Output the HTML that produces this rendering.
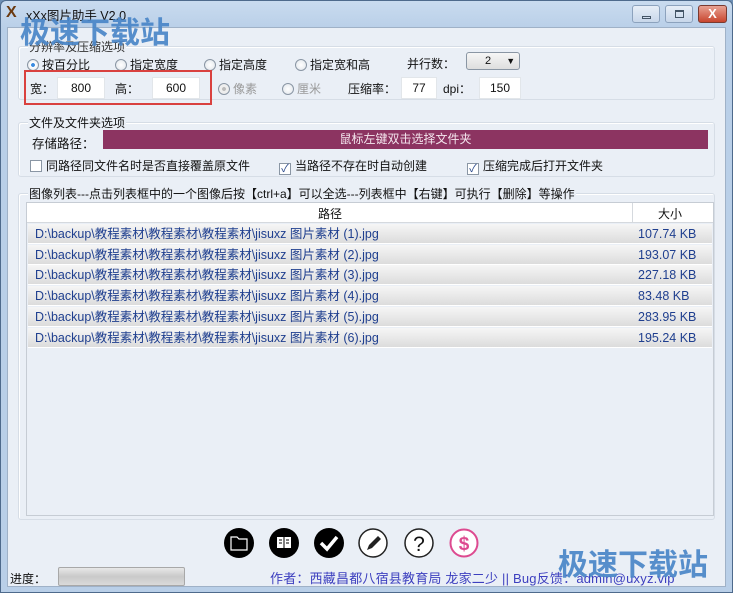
<!DOCTYPE html>
<html><head><meta charset="utf-8"><style>
*{margin:0;padding:0;box-sizing:border-box}
body{width:733px;height:593px;overflow:hidden;font-family:"Liberation Sans","Noto Sans CJK SC",sans-serif;font-size:12px;color:#111;background:#6d8fb5;position:relative}
.abs{position:absolute}
.win{left:0;top:0;width:733px;height:593px;background:linear-gradient(#c9dbef,#b9cfe8 28px);border:1px solid #4e6a8c;border-radius:6px 6px 0 0}
.client{left:7px;top:27px;width:719px;height:560px;background:#eaeff6;border:1px solid #9fb1c7}
.grp{border:1px solid #d6dde6;border-radius:3px;box-shadow:inset 1px 1px 0 #fff}
.lbl{background:#eaeff6;padding:0 1px;white-space:nowrap}
.radio{display:inline-block;width:12px;height:12px;border:1px solid #8a96a4;border-radius:50%;background:radial-gradient(#fff,#dfe4ea);vertical-align:-2px;margin-right:3px}
.radio.on{background:radial-gradient(#3a8be0 25%,#fff 30%,#dfe4ea)}
.chk{display:inline-block;width:12px;height:12px;border:1px solid #8a96a4;background:#fff;vertical-align:-2px;margin-right:4px;font-size:11px;line-height:10px;text-align:center;color:#2b4a8c}
.inp{background:#fff;border:1px solid #e2e6ea;text-align:center;line-height:20px;height:22px}
.row{left:28px;width:684px;height:20px;background:linear-gradient(#f6f6f6,#dcdcdc);border-bottom:1px solid #fff;color:#1f3f8f;line-height:20px;font-size:12.5px}
.row span{position:absolute}
.wm{color:#4a86c8;font-size:31px;font-weight:bold;font-family:"Noto Sans CJK SC",sans-serif;opacity:.92;letter-spacing:0}
</style></head><body>
<div class="abs win"></div>
<div class="abs" style="left:6px;top:4px;font-weight:bold;font-size:16px;color:#6b3a10">X</div>
<div class="abs" style="left:26px;top:5px;font-size:12.5px">xXx图片助手 V2.0</div>
<div class="abs" style="left:632px;top:5px;width:28px;height:18px;border:1px solid #8ca2bd;border-radius:3px;background:linear-gradient(#e7eef7,#c8d7ea)"><div class="abs" style="left:9px;top:10px;width:9px;height:3px;border:1px solid #456"></div></div>
<div class="abs" style="left:665px;top:5px;width:28px;height:18px;border:1px solid #8ca2bd;border-radius:3px;background:linear-gradient(#e7eef7,#c8d7ea)"><div class="abs" style="left:9px;top:4px;width:9px;height:8px;border:1px solid #456;border-top-width:2px"></div></div>
<div class="abs" style="left:698px;top:5px;width:29px;height:18px;border:1px solid #7a3a30;border-radius:3px;background:linear-gradient(#e8a293,#c8452e);color:#fff;font-weight:bold;text-align:center;line-height:16px;font-size:13px">X</div>
<div class="abs client"></div>

<div class="abs grp" style="left:18px;top:46px;width:697px;height:54px"></div>
<div class="abs lbl" style="left:28px;top:38px;color:#333">分辨率及压缩选项</div>
<div class="abs" style="left:27px;top:56px"><span class="radio on"></span>按百分比</div>
<div class="abs" style="left:115px;top:56px"><span class="radio"></span>指定宽度</div>
<div class="abs" style="left:204px;top:56px"><span class="radio"></span>指定高度</div>
<div class="abs" style="left:295px;top:56px"><span class="radio"></span>指定宽和高</div>
<div class="abs" style="left:407px;top:55px">并行数：</div>
<div class="abs" style="left:466px;top:52px;width:54px;height:18px;border:1px solid #8a96a4;border-radius:3px;background:linear-gradient(#f6f6f6,#dedede);font-size:11px;line-height:16px;padding-left:18px">2 <span style="margin-left:12px;font-size:9px">▼</span></div>
<div class="abs" style="left:24px;top:70px;width:188px;height:35px;border:2px solid #d9413f"></div>
<div class="abs" style="left:30px;top:80px">宽：</div>
<div class="abs inp" style="left:57px;top:77px;width:48px">800</div>
<div class="abs" style="left:115px;top:80px">高：</div>
<div class="abs inp" style="left:152px;top:77px;width:48px">600</div>
<div class="abs" style="left:218px;top:80px;color:#999"><span class="radio" style="background:radial-gradient(#bbb 25%,#eee 30%)"></span>像素</div>
<div class="abs" style="left:282px;top:80px;color:#999"><span class="radio"></span>厘米</div>
<div class="abs" style="left:348px;top:80px">压缩率：</div>
<div class="abs inp" style="left:401px;top:77px;width:36px">77</div>
<div class="abs" style="left:443px;top:80px">dpi：</div>
<div class="abs inp" style="left:479px;top:77px;width:42px">150</div>

<div class="abs grp" style="left:18px;top:122px;width:697px;height:55px"></div>
<div class="abs lbl" style="left:28px;top:114px">文件及文件夹选项</div>
<div class="abs" style="left:32px;top:133px;font-size:12.5px">存储路径：</div>
<div class="abs" style="left:103px;top:130px;width:605px;height:19px;background:#8c3461;color:#f4e6ee;text-align:center;line-height:19px">鼠标左键双击选择文件夹</div>
<div class="abs" style="left:30px;top:157px"><span class="chk"></span>同路径同文件名时是否直接覆盖原文件</div>
<div class="abs" style="left:279px;top:157px"><span class="chk">✓</span>当路径不存在时自动创建</div>
<div class="abs" style="left:467px;top:157px"><span class="chk">✓</span>压缩完成后打开文件夹</div>

<div class="abs grp" style="left:18px;top:193px;width:697px;height:327px"></div>
<div class="abs lbl" style="left:28px;top:185px">图像列表---点击列表框中的一个图像后按【ctrl+a】可以全选---列表框中【右键】可执行【删除】等操作</div>
<div class="abs" style="left:26px;top:202px;width:688px;height:314px;background:#eaeff6;border:1px solid #c6ccd4"></div>
<div class="abs" style="left:27px;top:203px;width:686px;height:20px;background:#fff;border-bottom:1px solid #d5d9de"></div>
<div class="abs" style="left:632px;top:203px;width:1px;height:20px;background:#d5d9de"></div>
<div class="abs" style="left:318px;top:205px">路径</div>
<div class="abs" style="left:658px;top:205px">大小</div>
<div class="abs row" style="top:224px"><span style="left:7px">D:\backup\教程素材\教程素材\教程素材\jisuxz 图片素材 (1).jpg</span><span style="left:610px">107.74 KB</span></div>
<div class="abs row" style="top:245px"><span style="left:7px">D:\backup\教程素材\教程素材\教程素材\jisuxz 图片素材 (2).jpg</span><span style="left:610px">193.07 KB</span></div>
<div class="abs row" style="top:265px"><span style="left:7px">D:\backup\教程素材\教程素材\教程素材\jisuxz 图片素材 (3).jpg</span><span style="left:610px">227.18 KB</span></div>
<div class="abs row" style="top:286px"><span style="left:7px">D:\backup\教程素材\教程素材\教程素材\jisuxz 图片素材 (4).jpg</span><span style="left:610px">83.48 KB</span></div>
<div class="abs row" style="top:307px"><span style="left:7px">D:\backup\教程素材\教程素材\教程素材\jisuxz 图片素材 (5).jpg</span><span style="left:610px">283.95 KB</span></div>
<div class="abs row" style="top:328px"><span style="left:7px">D:\backup\教程素材\教程素材\教程素材\jisuxz 图片素材 (6).jpg</span><span style="left:610px">195.24 KB</span></div>

<svg class="abs" style="left:0;top:0" width="733" height="593">
<circle cx="239" cy="543" r="15" fill="#000"/>
<path d="M231 537h6l2 2h8v11h-16z" fill="none" stroke="#fff" stroke-width="1.2"/>
<circle cx="284" cy="543" r="15" fill="#000"/>
<rect x="277" y="537" width="14" height="11" fill="#fff"/><path d="M284 537v11M279 540h3M279 543h3M286 540h3M286 543h3" stroke="#000" stroke-width="1"/>
<circle cx="329" cy="543" r="15" fill="#000"/>
<path d="M321 543l6 6 10-12" fill="none" stroke="#fff" stroke-width="3.5"/>
<circle cx="373" cy="543" r="14" fill="#fff" stroke="#222" stroke-width="1.5"/>
<path d="M367 550l2-5 9-9 3 3-9 9z" fill="#222"/>
<circle cx="419" cy="543" r="14" fill="#fff" stroke="#222" stroke-width="1.5"/>
<text x="419" y="551" font-size="21" text-anchor="middle" font-family="Liberation Sans" fill="#111">?</text>
<circle cx="464" cy="543" r="13.5" fill="#fff" stroke="#dd4a90" stroke-width="2"/>
<text x="464" y="550" font-size="19" font-weight="bold" text-anchor="middle" font-family="Liberation Sans" fill="#dd4a90">$</text>
</svg>

<div class="abs" style="left:10px;top:570px">进度：</div>
<div class="abs" style="left:58px;top:567px;width:127px;height:19px;border:1px solid #a8a8a8;border-radius:2px;background:linear-gradient(#e8e8e8,#c9c9c9 50%,#dadada)"></div>
<div class="abs" style="left:270px;top:568px;color:#3c3fbf;font-size:13px;letter-spacing:0.2px">作者：西藏昌都八宿县教育局 龙家二少 || Bug反馈：admin@uxyz.vip</div>

<div class="abs wm" style="left:20px;top:8px;font-size:30px">极速下载站</div>
<div class="abs wm" style="left:558px;top:540px;font-size:30px">极速下载站</div>
</body></html>
